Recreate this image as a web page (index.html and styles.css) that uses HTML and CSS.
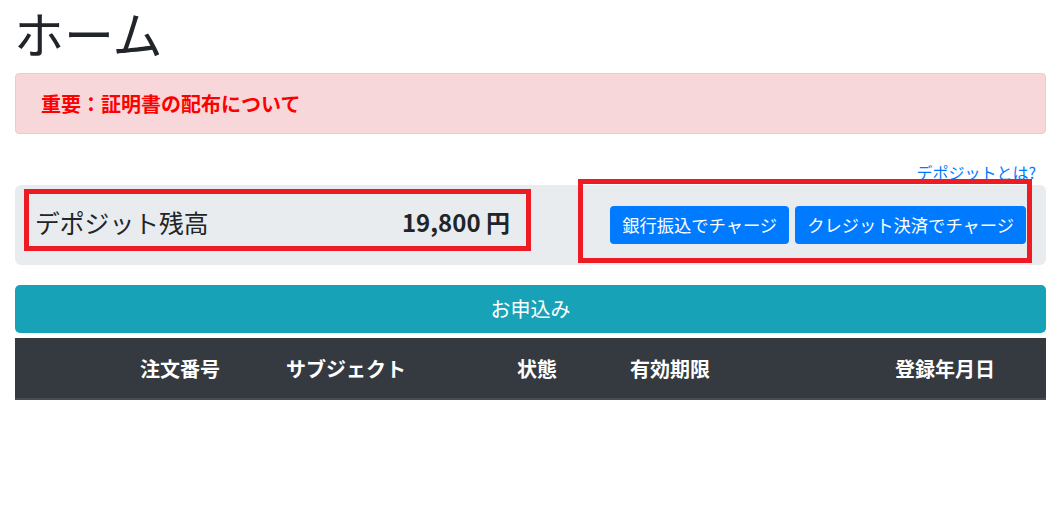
FILE: index.html
```html
<!DOCTYPE html>
<html lang="ja">
<head>
<meta charset="utf-8">
<title>ホーム</title>
<link rel="stylesheet" href="styles.css">
</head>
<body>
<div class="container">
  <h1 class="title">ホーム</h1>
  <div class="alert">重要：証明書の配布について</div>
  <div class="help"><a href="#" class="help-link">デポジットとは?</a></div>
  <div class="deposit">
    <div class="balance">
      <span class="balance-label">デポジット残高</span>
      <span class="balance-value">19,800 円</span>
    </div>
    <div class="charge">
      <a href="#" class="btn-primary">銀行振込でチャージ</a>
      <a href="#" class="btn-primary">クレジット決済でチャージ</a>
    </div>
    <div class="mark mark-left"></div>
    <div class="mark mark-right"></div>
  </div>
  <a href="#" class="btn-apply">お申込み</a>
  <div class="table-head">
    <div class="th"></div>
    <div class="th">注文番号</div>
    <div class="th">サブジェクト</div>
    <div class="th">状態</div>
    <div class="th">有効期限</div>
    <div class="th">登録年月日</div>
  </div>
</div>
</body>
</html>
```

FILE: styles.css
```css
* { box-sizing: border-box; }
html, body {
  margin: 0;
  padding: 0;
  background: #fff;
}
body {
  font-family: "Noto Sans CJK JP", "Noto Sans", sans-serif;
  color: #212529;
  font-size: 16px;
  padding-top: 1px;
}
.container {
  width: 1031px;
  margin-left: 15px;
}
.title {
  margin: -5px 0 0 -1px;
  font-size: 50px;
  font-weight: 400;
  line-height: 72px;
}
.alert {
  margin-top: 5px;
  height: 61px;
  background: #f8d7da;
  border: 1px solid #f5c6cb;
  border-radius: 4px;
  padding: 0 25px;
  color: #ff0000;
  font-weight: 700;
  font-size: 20px;
  line-height: 59px;
}
.help {
  margin-top: 26px;
  height: 25px;
  text-align: right;
  padding-right: 10px;
  line-height: 24px;
}
.help-link {
  color: #007bff;
  text-decoration: none;
  font-size: 16px;
}
.deposit {
  position: relative;
  height: 80px;
  background: #e9ecef;
  border-radius: 6px;
  display: flex;
  align-items: center;
  justify-content: space-between;
  padding: 0 20px;
}
.balance {
  width: 475px;
  display: flex;
  justify-content: space-between;
  align-items: center;
  font-size: 24px;
  line-height: 32px;
  padding-bottom: 7px;
}
.balance-label {
  font-weight: 400;
  font-size: 24.8px;
}
.balance-value {
  font-weight: 700;
}
.charge {
  display: flex;
  gap: 6px;
}
.btn-primary {
  display: block;
  height: 38px;
  line-height: 38px;
  padding: 0 12px;
  background: #007bff;
  color: #fff;
  border-radius: 4px;
  font-size: 17.3px;
  text-decoration: none;
  white-space: nowrap;
}
.mark {
  position: absolute;
  border: 5px solid #ed1c24;
  pointer-events: none;
}
.mark-left {
  left: 9px;
  top: 4px;
  width: 507px;
  height: 62px;
}
.mark-right {
  left: 563px;
  top: -6px;
  width: 454px;
  height: 84px;
}
.btn-apply {
  display: block;
  margin-top: 20px;
  height: 48px;
  line-height: 48px;
  background: #17a2b8;
  color: #fff;
  border-radius: 5px;
  text-align: center;
  font-size: 20px;
  text-decoration: none;
}
.table-head {
  margin-top: 5px;
  display: grid;
  grid-template-columns: 125px 146px 231px 113px 265px 1fr;
  height: 62px;
  background: #343a40;
  border-bottom: 2px solid #454d55;
  color: #fff;
  font-weight: 700;
  font-size: 20px;
  align-items: center;
}
.th {
  white-space: nowrap;
}
```
